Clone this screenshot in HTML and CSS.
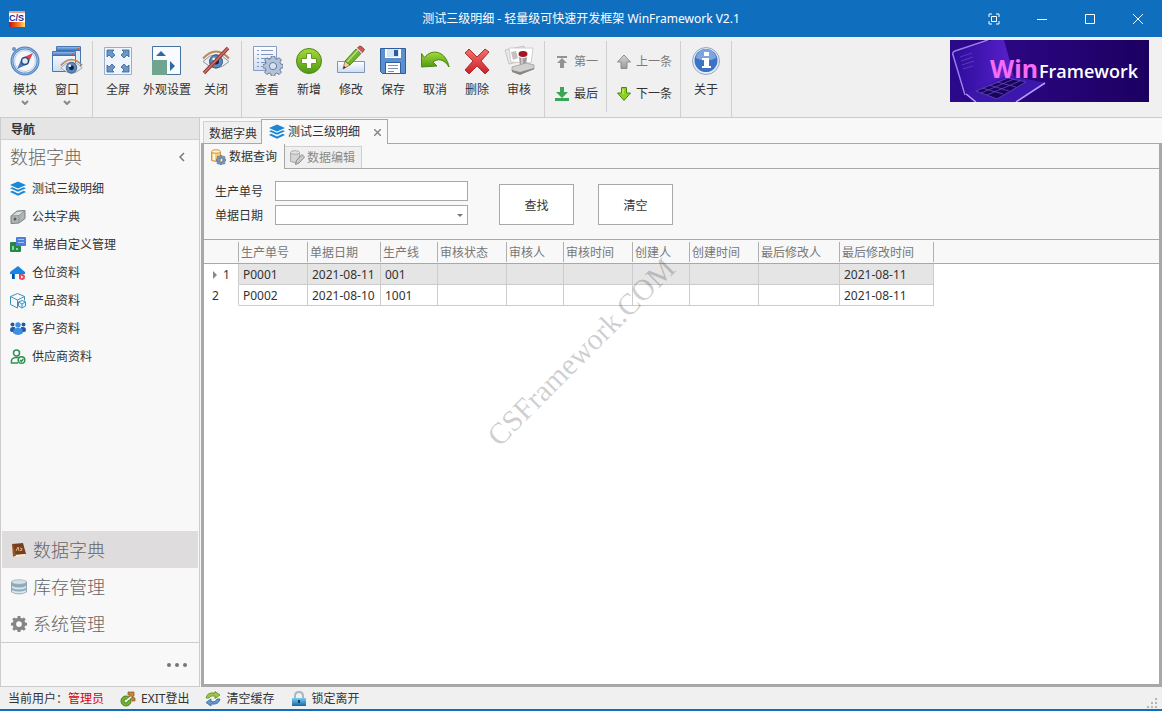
FILE: index.html
```html
<!DOCTYPE html>
<html lang="zh-CN">
<head>
<meta charset="utf-8">
<title>测试三级明细 - 轻量级可快速开发框架 WinFramework V2.1</title>
<link rel="stylesheet" href="styles.css">
</head>
<body>
<svg class="defs" width="0" height="0" aria-hidden="true">
  <defs>
    <linearGradient id="gBlue" x1="0" y1="0" x2="0" y2="1"><stop offset="0" stop-color="#8fb9e8"/><stop offset="1" stop-color="#2f68b4"/></linearGradient>
    <linearGradient id="gPale" x1="0" y1="0" x2="0" y2="1"><stop offset="0" stop-color="#ffffff"/><stop offset="1" stop-color="#cddcf0"/></linearGradient>
    <linearGradient id="gGreen" x1="0" y1="0" x2="0" y2="1"><stop offset="0" stop-color="#a6d93a"/><stop offset="1" stop-color="#4f9a12"/></linearGradient>
    <linearGradient id="gRed" x1="0" y1="0" x2="0" y2="1"><stop offset="0" stop-color="#f4716b"/><stop offset="1" stop-color="#c9202a"/></linearGradient>
    <linearGradient id="gGray" x1="0" y1="0" x2="0" y2="1"><stop offset="0" stop-color="#d6d6d6"/><stop offset="1" stop-color="#999"/></linearGradient>
    <linearGradient id="gLogo" x1="0" y1="0" x2="1" y2="0"><stop offset="0" stop-color="#c01010"/><stop offset=".6" stop-color="#ff7a20"/><stop offset="1" stop-color="#ffe27a"/></linearGradient>
    <linearGradient id="gLock" x1="0" y1="0" x2="0" y2="1"><stop offset="0" stop-color="#79cdf0"/><stop offset="1" stop-color="#1668a6"/></linearGradient>
    <linearGradient id="gNight" x1="0" y1="0" x2="1" y2="0"><stop offset="0" stop-color="#2a0a8c"/><stop offset=".35" stop-color="#2a0680"/><stop offset="1" stop-color="#1c0060"/></linearGradient>
    <linearGradient id="gScreen" x1="0" y1="0" x2="1" y2="0"><stop offset="0" stop-color="#2c0c9c"/><stop offset="1" stop-color="#5a22cc"/></linearGradient>
    <symbol id="layers" viewBox="0 0 16 16">
      <path fill="#1b87d6" d="M8 .5 16 4 8 7.500 0 4zM2.200 6.200 8 8.800l5.800-2.600L16 7.200l-8 3.600-8-3.600zM2.200 9.800 8 12.400l5.800-2.600 2.200 1.100-8 3.900-8-3.900z"/>
    </symbol>
    <symbol id="gear" viewBox="0 0 16 16">
      <path fill-rule="evenodd" d="M6.700 0h2.600l.4 2 1.400.6 1.800-1.200 1.800 1.800-1.200 1.800.6 1.400 2 .4v2.600l-2 .4-.6 1.400 1.200 1.800-1.800 1.800-1.800-1.200-1.400.6-.4 2H6.700l-.4-2-1.400-.6-1.800 1.200L1.300 13l1.200-1.800-.6-1.400-2-.4V6.800l2-.4.6-1.400-1.200-1.800 1.800-1.800 1.800 1.200 1.400-.6zM8 5.200a2.900 2.900 0 1 0 0 5.800 2.900 2.900 0 0 0 0-5.800z"/>
    </symbol>
    <symbol id="eye" viewBox="0 0 28 20">
      <path d="M1 11Q14-3 27 11 14 24 1 11z" fill="#e9eef4" stroke="#8795a8"/>
      <circle cx="14" cy="11" r="6.500" fill="#5f89bd" stroke="#34557e"/>
      <circle cx="14" cy="11" r="3" fill="#10253f"/><circle cx="12" cy="8.500" r="1.600" fill="#fff"/>
      <path d="M1 8Q14-6 27 8" fill="none" stroke="#b78b62" stroke-width="2"/>
    </symbol>
  </defs>
</svg>

<header class="titlebar">
  <svg class="app-logo" width="16" height="16" viewBox="0 0 16 16"><path fill="#fff" d="M0 0h16v16H0z"/><path fill="#e7a090" d="M0 0h16v2H0z"/><path fill="url(#gLogo)" d="M0 11h16v5H0z"/><text class="logo-text" x="0" y="10">C/S</text></svg>
  <h1 class="window-title">测试三级明细 - 轻量级可快速开发框架 WinFramework V2.1</h1>
  <div class="window-controls">
    <button class="win-btn" aria-label="全屏"><svg width="12" height="12" viewBox="0 0 12 12"><path d="M1 4V1h3M8 1h3v3M11 8v3H8M4 11H1V8M3.500 3.500h5v5h-5z"/></svg></button>
    <button class="win-btn" aria-label="最小化"><svg width="12" height="12" viewBox="0 0 12 12"><path d="M1 6.500h10"/></svg></button>
    <button class="win-btn" aria-label="最大化"><svg width="12" height="12" viewBox="0 0 12 12"><path d="M1.500 1.500h9v9h-9z"/></svg></button>
    <button class="win-btn" aria-label="关闭窗口"><svg width="12" height="12" viewBox="0 0 12 12"><path d="M1 1l10 10M11 1L1 11"/></svg></button>
  </div>
</header>

<nav class="ribbon" aria-label="工具栏">
  <div class="group">
    <button class="tool"><svg width="32" height="32" viewBox="0 0 32 32"><circle cx="5" cy="4" r="2" fill="#6c96c8"/><circle cx="16" cy="16" r="13" fill="#f3f7fc" stroke="#5687c0" stroke-width="3"/><circle cx="16" cy="16" r="13" fill="none" stroke="#8fb8e6" stroke-width="1"/><circle cx="16" cy="16" r="10.500" fill="none" stroke="#b5cbe6"/><path fill="#4a78b8" d="M8 24l5-11 6 6z"/><path fill="#e0444c" d="M24 8l-11 5 6 6z"/><circle cx="16" cy="16" r="3.500" fill="#dfeaf7" stroke="#2c4d7c" stroke-width="1.500"/></svg>模块<svg class="drop" width="8" height="5" viewBox="0 0 8 5"><path d="M1 1l3 3 3-3"/></svg></button>
    <button class="tool"><svg width="32" height="32" viewBox="0 0 32 32"><path fill="#dfeaf8" stroke="#4976b0" d="M5.500 1.500h24v20h-24z"/><path fill="url(#gBlue)" d="M6 2h23v4H6z"/><path fill="url(#gPale)" stroke="#4976b0" d="M1.500 6.500h23v20h-23z"/><path fill="url(#gBlue)" d="M2 7h22v4H2z"/><path fill="#d85b3b" d="M21 8h2v2h-2zM26 3h2v2h-2z"/><use href="#eye" x="9" y="13" width="23" height="18"/></svg>窗口<svg class="drop" width="8" height="5" viewBox="0 0 8 5"><path d="M1 1l3 3 3-3"/></svg></button>
  </div>
  <div class="group">
    <button class="tool"><svg width="32" height="32" viewBox="0 0 32 32"><path fill="#f0f5fc" stroke="#9aaeca" d="M2.500 2.500h27v27h-27z"/><g fill="#6b96c8" stroke="#34629b" stroke-width=".8"><path d="M5 5h7l-2 2 3 3-3 3-3-3-2 2z"/><path d="M27 5h-7l2 2-3 3 3 3 3-3 2 2z"/><path d="M5 27h7l-2-2 3-3-3-3-3 3-2-2z"/><path d="M27 27h-7l2-2-3-3 3-3 3 3 2-2z"/></g></svg>全屏</button>
    <button class="tool wide"><svg width="32" height="32" viewBox="0 0 32 32"><path fill="#f8fbff" stroke="#47729d" d="M1.500 1.500h28v28h-28z"/><path fill="#6fa58e" d="M1 15h15v15H1z"/><path fill="#2f6a9e" d="M5 11l5-5 5 5zM19 16l5 5-5 5z"/></svg>外观设置</button>
    <button class="tool"><svg width="32" height="32" viewBox="0 0 32 32"><use href="#eye" x="2" y="5" width="28" height="21"/><path d="M4 28L28 3" stroke="#8c3430" stroke-width="3.500"/><path d="M4 28L28 3" stroke="#cf6f66" stroke-width="1.800"/></svg>关闭</button>
  </div>
  <div class="group">
    <button class="tool"><svg width="32" height="32" viewBox="0 0 32 32"><path fill="url(#gPale)" stroke="#8a9cc0" d="M2.500 1.500h23v24h-23z"/><path stroke="#7f96c2" d="M6 5.500h2M10 5.500h12M6 9.500h2M10 9.500h12M6 13.500h2M10 13.500h9M6 17.500h2M10 17.500h5M6 21.500h2M10 21.500h4"/><use href="#gear" x="12" y="11" width="20" height="20" fill="#b4c3d8" stroke="#647b9d" stroke-width=".8"/></svg>查看</button>
    <button class="tool"><svg width="32" height="32" viewBox="0 0 32 32"><circle cx="16" cy="16" r="12.500" fill="url(#gGreen)" stroke="#4a8714"/><path fill="#fff" stroke="#659c20" d="M13.500 8.500h5v5h5v5h-5v5h-5v-5h-5v-5h5z"/></svg>新增</button>
    <button class="tool"><svg width="32" height="32" viewBox="0 0 32 32"><path fill="url(#gPale)" stroke="#8095ba" d="M2.500 16.500h27v11h-27z"/><path fill="#f0d29c" stroke="#8d6b3e" stroke-width=".8" d="M8 24l2-8 5 4z"/><path fill="#333" d="M8 24l1-3 2 1.500z"/><path fill="#75b32c" stroke="#3e7317" stroke-width=".8" d="M10 16L21 4l5 4.500L15 20z"/><path stroke="#b7e16b" stroke-width="1.500" d="M12 17L23 5"/><path fill="#d9514a" stroke="#98302b" stroke-width=".8" d="M22.500 3l2-2q2-.5 5 3.500l-2 3z"/><path stroke="#ccc" stroke-width="1.500" d="M22 3.500l5 4.500"/></svg>修改</button>
    <button class="tool"><svg width="32" height="32" viewBox="0 0 32 32"><path fill="#5a90d0" stroke="#2c5c99" d="M3.500 3.500h25v25h-23l-2-2z"/><path fill="#fff" d="M8 4h16v9H8z"/><path fill="#d9e5f3" d="M10 4h12v8H10z"/><path fill="#2c5c99" d="M17 5h4v6h-4z"/><path fill="#fff" stroke="#2e5f9e" d="M8.500 17.500h15v11h-15z"/><path stroke="#7892b8" d="M11 20.500h10M11 23.500h10M11 26.500h6"/></svg>保存</button>
    <button class="tool"><svg width="32" height="32" viewBox="0 0 32 32"><path fill="url(#gGreen)" stroke="#4a8914" d="M2.500 8.500l3 4C13 3 27 6 30 22c-5-8-11-9-16-5l4 4-15.500 1z"/></svg>取消</button>
    <button class="tool"><svg width="32" height="32" viewBox="0 0 32 32"><path fill="url(#gRed)" stroke="#b62c31" stroke-linejoin="round" d="M4 8l4-4 8 8 8-8 4 3-8 9 8 9-4 4-8-8-8 8-4-4 8-9z"/></svg>删除</button>
    <button class="tool"><svg width="32" height="32" viewBox="0 0 32 32"><path fill="#e7e7e7" stroke="#bbb" stroke-width=".8" d="M2 5l19-4 3 14-18 4z"/><path fill="#fff" stroke="#c4c4c4" stroke-width=".8" d="M6 3h24l-2 15-20-1z"/><path fill="#c4c0c0" d="M8 7l5-1 2 7-5 2z"/><ellipse cx="20" cy="9" rx="4.500" ry="3" fill="#9f1723"/><path fill="#a39d9e" d="M16 12q4 2 8 0l-1 9h-6z"/><path fill="#cbc6c6" d="M18 13h2v8h-2z"/><path fill="#d2cfcf" stroke="#a39d9c" stroke-width=".8" d="M9 22l14-4 8 2v4l-14 5-8-3z"/><path fill="#8c8584" d="M9 25l8 2 14-4v1l-14 6-8-3z"/></svg>审核</button>
  </div>
  <div class="group stack">
    <button class="tool-row" disabled><svg width="16" height="16" viewBox="0 0 16 16"><path fill="#939393" d="M3 2h10v2H3zM8 4l5 5H10v5H6V9H3z"/></svg>第一</button>
    <button class="tool-row"><svg width="16" height="16" viewBox="0 0 16 16"><path fill="#3aa457" d="M6 1h4v5h4l-6 6-6-6h4zM1 12h14v3H1z"/></svg>最后</button>
  </div>
  <div class="group stack">
    <button class="tool-row" disabled><svg width="16" height="16" viewBox="0 0 16 16"><path fill="url(#gGray)" stroke="#8d8d8d" d="M8 1l6.500 7H11v6.500H5V8H1.500z"/></svg>上一条</button>
    <button class="tool-row"><svg width="16" height="16" viewBox="0 0 16 16"><path fill="#8fd21e" stroke="#438c10" d="M5.500 1.500h5V7h4L8 14.500 1.500 7h4z"/><path stroke="#d7f58e" d="M7 3v5"/></svg>下一条</button>
  </div>
  <div class="group">
    <button class="tool"><svg width="32" height="32" viewBox="0 0 32 32"><circle cx="16" cy="16" r="13.500" fill="#e5edf7" stroke="#92a7c4"/><circle cx="16" cy="15.500" r="11.500" fill="#3d73c4"/><path fill="#7ca5e0" d="M6 13a10 9 0 0 1 20 0q-10 5-20 0z"/><path fill="#fff" d="M14 7h5v4h-5zM12 13h7v8h2v2h-9v-2h2v-6h-2z"/></svg>关于</button>
  </div>
  <svg class="banner" width="199" height="62" viewBox="0 0 199 62" role="img" aria-label="WinFramework">
    <path fill="url(#gNight)" d="M0 0h199v62H0z"/>
    <path fill="url(#gScreen)" d="M3 13L42 0h12l10 37-48 17z"/>
    <path fill="none" stroke="#9c7bed" stroke-width="1.500" d="M38 0L5 11q-3 1-2 4l12 40"/>
    <path stroke="#5a38b8" d="M10 17l12-4M11 21l12-4M12 25l12-4M13 29l10-3" fill="none"/>
    <path fill="#3b18ab" d="M16 54l42-19 38 8-29 19H23z"/>
    <path fill="#180458" stroke="#593aba" d="M26 51l32-13 18 4-29 17z"/>
    <path fill="none" stroke="#6545c7" stroke-width=".8" d="M31 53l33-14M37 55l33-14M32 48l21 6M39 45l20 6M47 42l19 5"/>
    <path stroke="#b79bff" stroke-width="1.500" fill="none" d="M16 54l10 8M95 43L66 62"/>
    <text class="banner-win" x="40" y="38">Win</text><text class="banner-frame" x="89" y="38">Framework</text>
  </svg>
</nav>

<main class="workspace">
  <aside class="sidebar">
    <h2 class="side-head">导航</h2>
    <div class="side-title"><span>数据字典</span><button class="collapse" aria-label="折叠"><svg width="6" height="10" viewBox="0 0 6 10"><path d="M5 1L1 5l4 4"/></svg></button></div>
    <ul class="side-list">
      <li><button class="side-item"><svg width="16" height="16"><use href="#layers"/></svg>测试三级明细</button></li>
      <li><button class="side-item"><svg width="16" height="16" viewBox="0 0 16 16"><path fill="#aeb5b4" stroke="#777f80" d="M1 7l6-5 8-.5v8L9 14l-8 .5z"/><path fill="#d9dddc" d="M2 7l5-4 7-.5-5 4.500z"/><path stroke="#8d9595" fill="none" d="M1 7l8-.5V14M9 6.500l6-5"/><circle cx="5" cy="10" r="1.500" fill="#596062"/></svg>公共字典</button></li>
      <li><button class="side-item"><svg width="16" height="16" viewBox="0 0 16 16"><rect y="5" width="11" height="10" rx="1" fill="#268848"/><path fill="#8bd49d" d="M2 9h2v4H2zM6 11h2v2H6z"/><rect x="6" width="10" height="9" rx="1" fill="#4d7edb"/><path fill="#a9c5fa" d="M8 2h6v1H8zM8 5h6v1H8z"/></svg>单据自定义管理</button></li>
      <li><button class="side-item"><svg width="16" height="16" viewBox="0 0 16 16"><path fill="#1785e2" d="M8 1l7 6v2h-2v5H2V9H0V7z"/><path fill="#fff" d="M5 9h4v5H5z"/><path fill="#124b93" d="M2 9h2v5H2z"/><circle cx="12" cy="12" r="3" fill="#ef4858"/><path fill="#fff" d="M11 10.500l2.500 1.500-2.500 1.500z"/></svg>仓位资料</button></li>
      <li><button class="side-item"><svg width="16" height="16" viewBox="0 0 16 16"><path fill="none" stroke="#3f91b8" d="M7.500.5l7 3v4M.5 3.500l7-3M.5 3.500v8l7 3.500M.5 3.500l7 3.500 7-3.500M7.500 7v8"/><path fill="#e8f6ff" stroke="#3f91c8" d="M12 7.500l3.500 1.500v4L12 15l-3.500-2V9zM8.500 9l3.500 2 3.500-2M12 11v4"/></svg>产品资料</button></li>
      <li><button class="side-item"><svg width="16" height="16" viewBox="0 0 16 16"><g fill="#235aa8"><circle cx="2.500" cy="3.500" r="2"/><circle cx="13.500" cy="3.500" r="2"/><path d="M0 9q0-3 3-3h2v5H2q-2 0-2-2zM16 9q0-3-3-3h-2v5h3q2 0 2-2z"/></g><circle cx="8" cy="4" r="2.700" fill="#3d8ee3"/><path fill="#3d8ee3" d="M3 12q0-5 4-5h2q4 0 4 5-5 4-10 0z"/></svg>客户资料</button></li>
      <li><button class="side-item"><svg width="16" height="16" viewBox="0 0 16 16"><g fill="none" stroke="#2e9152" stroke-width="1.500"><circle cx="6.500" cy="4" r="3"/><path d="M8 14H1.500q-1-5 4-5.500h3"/><circle cx="11.500" cy="11" r="3.300"/><path d="M10 11l1.300 1.300 2-2.300"/></g></svg>供应商资料</button></li>
    </ul>
    <div class="side-groups">
      <button class="side-group active"><svg width="16" height="16" viewBox="0 0 16 16"><path fill="#74401f" d="M1 2l11-1 3 11-11 2z"/><path fill="#f5ead8" d="M2 13l12-1v2l-11 1z"/><path fill="#9a5227" d="M1 2l1-.2 3 12-3 1z"/><path stroke="#e7b881" fill="none" d="M5 9l2-4 1 4M9 6l2 .5-.5 2H9"/></svg>数据字典</button>
      <button class="side-group"><svg width="16" height="16" viewBox="0 0 16 16"><path fill="#8eabbc" stroke="#718c9d" stroke-width=".6" d="M.5 3v10q7.500 4 15 0V3z"/><path fill="#d7e5ec" d="M1 7q7 3 14 0v2q-7 3-14 0zM1 11q7 3 14 0v2q-7 3-14 0z"/><ellipse cx="8" cy="3" rx="7.500" ry="2.300" fill="#d5e1e7" stroke="#89a0ae" stroke-width=".6"/></svg>库存管理</button>
      <button class="side-group"><svg width="16" height="16" fill="#858585"><use href="#gear"/></svg>系统管理</button>
    </div>
    <div class="side-more"><button class="more" aria-label="更多"><svg width="20" height="4" viewBox="0 0 20 4"><circle cx="2" cy="2" r="2"/><circle cx="10" cy="2" r="2"/><circle cx="18" cy="2" r="2"/></svg></button></div>
  </aside>

  <section class="documents">
    <div class="doc-tabs">
      <button class="doc-tab">数据字典</button>
      <div class="doc-tab active"><button class="tab-label"><svg width="16" height="16"><use href="#layers"/></svg>测试三级明细</button><button class="tab-close" aria-label="关闭标签"><svg width="7" height="7" viewBox="0 0 7 7"><path d="M0 0l7 7M7 0L0 7"/></svg></button></div>
    </div>
    <div class="doc-body">
      <div class="page-tabs">
        <button class="page-tab active"><svg width="16" height="16" viewBox="0 0 16 16"><path fill="#f5ce77" stroke="#cf9a45" d="M1.500 2.500v9q4.500 2 9 0v-9"/><ellipse cx="6" cy="2.500" rx="4.500" ry="1.800" fill="#fff1c9" stroke="#cf9a45"/><path fill="#fff7df" d="M3 5h2v6H3z"/><use href="#gear" x="6" y="6" width="10" height="10" fill="#7791b6" stroke="#4f698e" stroke-width=".8"/></svg>数据查询</button>
        <button class="page-tab"><svg width="16" height="16" viewBox="0 0 16 16"><path fill="#d4d4d4" stroke="#aaa" d="M1.500 2.500v9q4.500 2 9 0v-9"/><ellipse cx="6" cy="2.500" rx="4.500" ry="1.800" fill="#e4e4e4" stroke="#aaa"/><path fill="#ccc" stroke="#888" d="M6.500 14.500l1-4 5.500-6 2.500 2.500-5.500 6z"/></svg>数据编辑</button>
      </div>
      <form class="query">
        <div class="fields">
          <label for="order-no">生产单号</label><input id="order-no" class="field" type="text">
          <label for="order-date">单据日期</label><span class="combo"><select id="order-date" class="field"><option></option></select></span>
        </div>
        <button class="query-btn" type="button">查找</button>
        <button class="query-btn" type="reset">清空</button>
      </form>
      <div class="grid-area">
        <table class="grid">
          <colgroup><col class="c-mark"><col class="c-69"><col class="c-73"><col class="c-57"><col class="c-69"><col class="c-57"><col class="c-69"><col class="c-57"><col class="c-69"><col class="c-81"><col class="c-94"><col></colgroup>
          <thead><tr><th></th><th>生产单号</th><th>单据日期</th><th>生产线</th><th>审核状态</th><th>审核人</th><th>审核时间</th><th>创建人</th><th>创建时间</th><th>最后修改人</th><th>最后修改时间</th><th class="rest"></th></tr></thead>
          <tbody>
            <tr class="selected"><td class="mark"><span class="pointer"></span>1</td><td>P0001</td><td>2021-08-11</td><td>001</td><td></td><td></td><td></td><td></td><td></td><td></td><td>2021-08-11</td><td class="rest"></td></tr>
            <tr><td class="mark">2</td><td>P0002</td><td>2021-08-10</td><td>1001</td><td></td><td></td><td></td><td></td><td></td><td></td><td>2021-08-11</td><td class="rest"></td></tr>
          </tbody>
        </table>
        <div class="watermark">CSFramework.COM</div>
      </div>
    </div>
  </section>
</main>

<footer class="statusbar">
  <span class="user">当前用户：<strong>管理员</strong></span>
  <button class="status-btn"><svg width="16" height="16" viewBox="0 0 16 16"><path fill="#c78543" stroke="#8e5320" stroke-width=".7" d="M8 1h6v4l-2 1 3 1v3h-3V8L9 7l1-3H8z"/><circle cx="6" cy="10" r="5" fill="#73b32e" stroke="#46811a"/><circle cx="6" cy="10" r="2" fill="#e8f6cc" stroke="#46811a"/><path stroke="#fff" stroke-width="1.500" d="M6 10l5-4"/></svg>EXIT登出</button>
  <button class="status-btn"><svg width="16" height="16" viewBox="0 0 16 16"><path fill="#9bc83e" stroke="#618c25" stroke-width=".8" d="M1 7q1-6 9-5V.5L15 4l-5 3.500V5Q5 4 4 7z"/><path fill="#6499cf" stroke="#336699" stroke-width=".8" d="M15 8q-1 6-9 5v2L1 11.500 6 8v2.500q5 1 6-2.500z"/></svg>清空缓存</button>
  <button class="status-btn"><svg width="16" height="16" viewBox="0 0 16 16"><path fill="none" stroke="#a9b7be" stroke-width="2" d="M4 8V5q0-4 4-4t4 4v3"/><path fill="url(#gLock)" d="M1 7h14v8H1z"/><path fill="#124565" d="M7 9h2v3H7z"/></svg>锁定离开</button>
  <svg class="grip" width="11" height="11" viewBox="0 0 11 11"><path fill="#b4b4b4" d="M8 0h2v2H8zM4 4h2v2H4zM8 4h2v2H8zM0 8h2v2H0zM4 8h2v2H4zM8 8h2v2H8z"/></svg>
</footer>
</body>
</html>
```
FILE: styles.css
```css
* { box-sizing: border-box; }
body {
  margin: 0;
  min-height: 100vh;
  display: flex;
  flex-direction: column;
  background: #f0f0f0;
  color: #333;
  font: 12px/16px "Noto Sans", "Noto Sans CJK SC", sans-serif;
  border-bottom: 2px solid #106ebe;
}
button {
  margin: 0;
  padding: 0;
  border: 0;
  background: none;
  color: inherit;
  font: inherit;
}
svg { flex: none; }
.defs { position: absolute; }

/* Title bar */
.titlebar {
  display: grid;
  grid-template-columns: 1fr auto 1fr;
  align-items: center;
  height: 37px;
  padding-top: 1px;
  background: #106ebe;
  color: #fff;
}
.app-logo { margin-left: 9px; }
.logo-text { font: bold 9px "Liberation Sans", sans-serif; fill: #24249a; }
.window-title { margin: 0; font-size: 12px; font-weight: 400; line-height: 16px; }
.window-controls { display: flex; justify-content: flex-end; }
.win-btn { width: 48px; height: 36px; }
.win-btn svg { display: block; margin: auto; fill: none; stroke: #fff; }

/* Ribbon */
.ribbon {
  display: flex;
  height: 81px;
  padding-top: 4px;
  border-bottom: 1px solid #ccc;
}
.group { display: flex; padding: 0 4px; border-right: 1px solid #d0d0d0; }
.tool {
  display: flex;
  flex-direction: column;
  align-items: center;
  width: 42px;
  padding-top: 4px;
  gap: 5px;
}
.tool.wide { width: 56px; }
.tool .drop { margin-top: -3px; fill: none; stroke: #888; stroke-width: 2; }
.group.stack { flex-direction: column; gap: 16px; padding: 13px 8px 0 9px; }
.group.stack:has(+ .stack) { margin-bottom: 5px; }
.tool-row { display: flex; align-items: center; gap: 4px; height: 16px; }
.tool-row:disabled { color: #7c7c7c; }
.banner { margin: -1px 13px 0 auto; }
.banner-win { font: bold 25px "Noto Sans", sans-serif; fill: #f66cf2; }
.banner-frame { font: 600 18px "Open Sans", sans-serif; fill: #fff; }

/* Workspace */
.workspace { flex: 1; display: flex; }
.sidebar {
  width: 200px;
  display: flex;
  flex-direction: column;
  background: #f8f8f8;
  border: 1px solid #ccc;
  border-top: 0;
}
.side-head {
  margin: 0;
  height: 22px;
  padding: 0 10px;
  background: #e5e5e5;
  border-bottom: 1px solid #d0d0d0;
  font-size: 12px;
  line-height: 24px;
}
.side-title {
  display: flex;
  align-items: center;
  justify-content: space-between;
  height: 34px;
  padding: 0 14px 0 9px;
  color: #666;
  font-size: 18px;
  font-weight: 300;
}
.collapse { display: flex; }
.collapse svg { fill: none; stroke: #777; stroke-width: 1.5; }
.side-list { list-style: none; margin: 0; padding: 0; }
.side-item {
  display: flex;
  align-items: center;
  gap: 6px;
  width: 100%;
  height: 28px;
  padding: 1px 9px 0;
}
.side-groups { margin-top: auto; padding: 0 1px; border-bottom: 1px solid #ccc; }
.side-group {
  display: flex;
  align-items: center;
  gap: 6px;
  width: 100%;
  height: 37px;
  padding: 0 9px;
  color: #666;
  font-size: 18px;
  font-weight: 300;
}
.side-group.active { background: #dedcdd; }
.side-more { display: flex; justify-content: flex-end; align-items: center; height: 43px; padding: 0 12px; }
.more { display: flex; }
.more svg { fill: #777; }

/* Documents */
.documents { flex: 1; display: flex; flex-direction: column; min-width: 0; padding-left: 1px; background: #f8f8f8; }
.doc-tabs, .page-tabs { display: flex; align-items: flex-end; padding-left: 2px; border-bottom: 1px solid #a8a8a8; }
.doc-tabs { height: 26px; }
.doc-tab { height: 22px; padding: 2px 4px 0 5px; background: #f0f0f0; border: 1px solid #d0d0d0; border-width: 1px 0 0 1px; }
.doc-tab.active {
  display: flex;
  align-items: center;
  height: 25px;
  margin-bottom: -1px;
  padding: 0 6px 0 7px;
  gap: 14px;
  background: #f8f8f8;
  border: 1px solid #a8a8a8;
  border-bottom: 0;
}
.tab-label { display: flex; align-items: center; gap: 3px; }
.tab-close { display: flex; }
.tab-close svg { fill: none; stroke: #888; stroke-width: 1.5; }
.doc-body {
  flex: 1;
  display: flex;
  flex-direction: column;
  border: solid #a8a8a8;
  border-width: 0 3px 3px;
}
.page-tabs { height: 25px; padding: 0; }
.page-tab {
  display: flex;
  align-items: center;
  gap: 2px;
  height: 22px;
  padding: 0 6px 0 4px;
  background: #f0f0f0;
  border: 1px solid #d0d0d0;
  border-width: 1px 1px 0 0;
  color: #888;
}
.page-tab.active { height: 25px; margin-bottom: -1px; padding: 0 7px 0 6px; gap: 3px; background: #f8f8f8; border-color: #a8a8a8; border-top: 0; color: #333; }

.query { display: flex; align-items: center; gap: 24px; height: 70px; padding-left: 11px; }
.fields { display: grid; grid-template-columns: 60px 193px; row-gap: 4px; align-items: center; margin: -3px 7px 0 0; }
.fields label { padding-top: 3px; }
.field {
  display: block;
  width: 100%;
  height: 20px;
  margin: 0;
  padding: 0 4px;
  appearance: none;
  background: #fff;
  border: 1px solid #a8a8a8;
  border-radius: 0;
  font: inherit;
}
.combo { position: relative; }
.combo::after {
  content: "";
  position: absolute;
  right: 5px;
  top: 9px;
  border: 3px solid transparent;
  border-top-color: #777;
  pointer-events: none;
}
.query-btn { width: 75px; height: 41px; padding-top: 3px; background: #fff; border: 1px solid #a8a8a8; }

/* Data grid */
.grid-area { position: relative; flex: 1; background: #fff; border-top: 1px solid #a8a8a8; }
.grid { width: 100%; table-layout: fixed; border-collapse: separate; border-spacing: 0; }
.c-mark { width: 35px; }
.c-57 { width: 57px; }
.c-69 { width: 69px; }
.c-73 { width: 73px; }
.c-81 { width: 81px; }
.c-94 { width: 94px; }
.grid th {
  height: 24px;
  padding: 2px 3px 0 2px;
  text-align: left;
  font-weight: 400;
  white-space: nowrap;
  color: #777;
  background: linear-gradient(#b0b0b0, #b0b0b0) right center / 1px 20px no-repeat #f8f8f8;
  border-bottom: 1px solid #a8a8a8;
}
.grid td { height: 21px; padding: 2px 4px 0; white-space: nowrap; border: solid #ccc; border-width: 0 1px 1px 0; }
.grid .selected td { background: #e5e5e5; }
.grid td.mark, .grid .selected td.mark { padding: 2px 8px 0; background: #fff; border-bottom-color: #fff; }
.grid th.rest, .grid td.rest, .grid .selected td.rest { padding: 0; }
.grid th.rest { background: #f8f8f8; }
.grid td.rest, .grid .selected td.rest { background: #fff; border: 0; }
.pointer {
  display: inline-block;
  margin: 0 6px 0 1px;
  border: solid transparent;
  border-width: 4px 0 4px 4px;
  border-left-color: #888;
}
.watermark {
  position: absolute;
  left: 377px;
  top: 112px;
  transform: translate(-50%, -50%) rotate(-45deg);
  color: rgba(0, 0, 0, .2);
  font: 30px/36px "Liberation Serif", serif;
  pointer-events: none;
}

/* Status bar */
.statusbar { display: flex; align-items: center; gap: 16px; height: 22px; padding: 2px 4px 0 8px; }
.user strong { color: #d4000f; font-weight: 400; }
.status-btn { display: flex; align-items: center; gap: 5px; }
.grip { margin-left: auto; align-self: flex-end; }
```
